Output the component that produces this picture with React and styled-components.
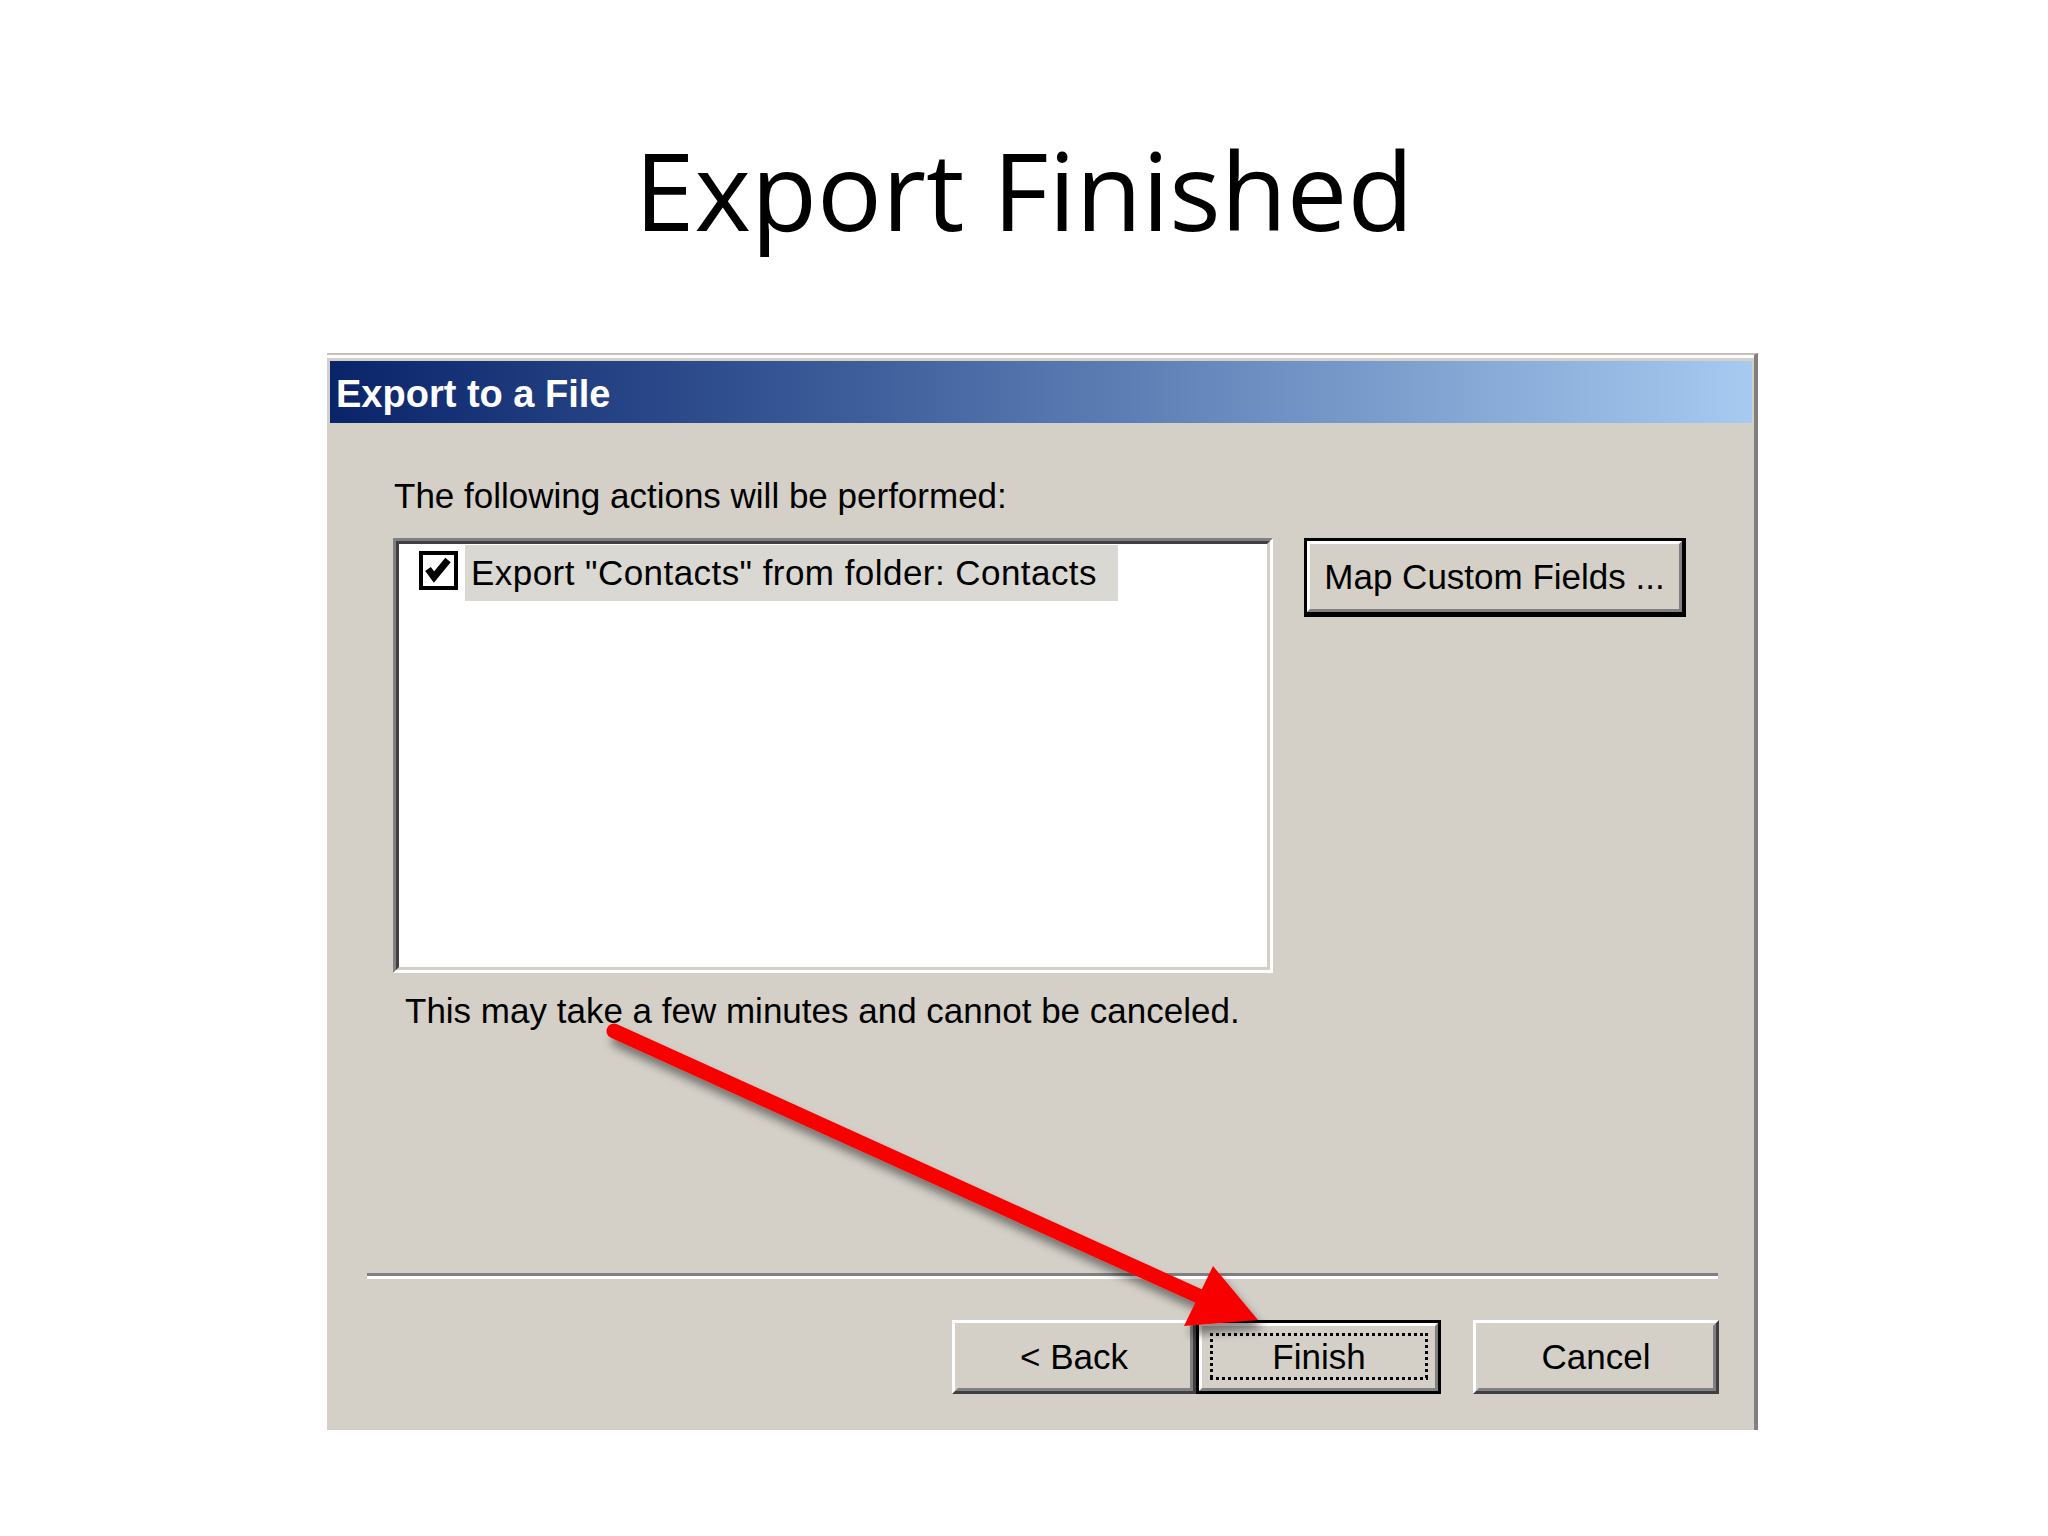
import React from 'react';
import styled, { createGlobalStyle } from 'styled-components';

const GlobalStyle = createGlobalStyle`
  html, body {
    margin: 0;
    padding: 0;
    background: #fff;
  }
`;

const Page = styled.div`
  position: relative;
  width: 2048px;
  height: 1536px;
  overflow: hidden;
  background: #fff;
`;

const Title = styled.h1`
  margin: 0;
  padding-top: 125px;
  height: 130px;
  font-family: "Open Sans", "Liberation Sans", sans-serif;
  font-weight: 400;
  font-size: 108px;
  line-height: 130px;
  text-align: center;
  color: #000;
`;

const Dialog = styled.div`
  box-sizing: border-box;
  width: 1431px;
  height: 1077px;
  margin: 98px 0 0 327px;
  padding: 6px 2px 0 3px;
  display: flex;
  flex-direction: column;
  background: #d4d0c8;
  border-top: 2px solid #c4c1ba;
  border-right: 4px solid #808080;
  box-shadow: inset 0 3px 0 #fff;
  font-family: "Liberation Sans", Arial, sans-serif;
  font-size: 35px;
  color: #000;
`;

const TitleBar = styled.div`
  box-sizing: border-box;
  height: 62px;
  padding: 4px 0 0 6px;
  display: flex;
  align-items: center;
  background: linear-gradient(90deg, #0a246a 0%, #3a5a98 35%, #a6caf0 100%);
  color: #fff;
  font-weight: 700;
  font-size: 38px;
  white-space: nowrap;
`;

const Body = styled.div`
  box-sizing: border-box;
  height: 850px;
  padding-left: 63px;
  display: flex;
  flex-direction: column;
`;

const Prompt = styled.div`
  margin: 53px 0 0 1px;
  line-height: 40px;
  white-space: nowrap;
`;

const Row = styled.div`
  margin-top: 22px;
  display: flex;
  align-items: flex-start;
  gap: 31px;
`;

const ListBox = styled.div`
  box-sizing: border-box;
  width: 880px;
  height: 435px;
  border: 3px solid;
  border-color: #808080 #fff #fff #808080;
`;

const ListInner = styled.div`
  box-sizing: border-box;
  height: 100%;
  padding-top: 1px;
  border: 3px solid;
  border-color: #404040 #d4d0c8 #d4d0c8 #404040;
  background: #fff;
`;

const Item = styled.div`
  display: flex;
  align-items: flex-start;
  height: 56px;
`;

const CheckBox = styled.span`
  box-sizing: border-box;
  width: 39px;
  height: 39px;
  margin: 6px 0 0 20px;
  border: 4px solid #000;
  background: #fff;
  display: flex;

  svg {
    display: block;
  }
`;

const ItemLabel = styled.span`
  margin-left: 7px;
  height: 56px;
  line-height: 56px;
  padding: 0 21px 0 6px;
  background: #dad8d3;
  letter-spacing: 0.45px;
  white-space: nowrap;
`;

const Note = styled.div`
  margin: 18px 0 0 12px;
  line-height: 40px;
  white-space: nowrap;
`;

const Separator = styled.div`
  margin: 0 34px 0 37px;
  height: 3px;
  background: #808080;
  border-bottom: 3px solid #fff;
`;

const ButtonRow = styled.div`
  display: flex;
  justify-content: flex-end;
  padding: 41px 33px 0 0;
`;

const ButtonFrame = styled.div`
  box-sizing: border-box;
  width: ${p => p.$width}px;
  height: ${p => p.$height || 74}px;
  margin-right: ${p => p.$gap || 0}px;
  border: 3px solid;
  border-color: ${p => (p.$default ? '#000' : '#fff #404040 #404040 #fff')};
  border-width: ${p => p.$thick ? '3px 4px 5px 3px' : '3px'};
`;

const ButtonFace = styled.div`
  box-sizing: border-box;
  height: 100%;
  display: flex;
  align-items: center;
  justify-content: center;
  padding: ${p => (p.$focus ? '7px 7px 8px 8px' : '0')};
  border: 3px solid;
  border-color: ${p => (p.$raised ? '#fff #808080 #808080 #fff' : '#d4d0c8 #808080 #808080 #d4d0c8')};
  white-space: nowrap;
  line-height: 40px;
`;

/* dotted focus rectangle with square dots, like the classic button */
const FocusRect = styled.div`
  flex: 1;
  align-self: stretch;
  display: flex;
  align-items: center;
  justify-content: center;
  background:
    repeating-linear-gradient(90deg, #000 0 3px, transparent 3px 6px) top left / 100% 3px no-repeat,
    repeating-linear-gradient(90deg, #000 0 3px, transparent 3px 6px) bottom left / 100% 3px no-repeat,
    repeating-linear-gradient(180deg, #000 0 3px, transparent 3px 6px) top left / 3px 100% no-repeat,
    repeating-linear-gradient(180deg, #000 0 3px, transparent 3px 6px) top right / 3px 100% no-repeat;
`;

const Overlay = styled.svg`
  position: absolute;
  top: 0;
  left: 0;
  pointer-events: none;
`;

const Check = () => (
  <svg width="31" height="31" viewBox="0 0 31 31">
    <polyline points="5,14 11,22 25,5" fill="none" stroke="#000" strokeWidth="7" strokeLinejoin="miter" />
  </svg>
);

const WizardButton = ({ label, width, gap, isDefault }) => (
  <ButtonFrame $width={width} $gap={gap} $default={isDefault}>
    <ButtonFace $raised={isDefault} $focus={isDefault}>
      {isDefault ? <FocusRect>{label}</FocusRect> : label}
    </ButtonFace>
  </ButtonFrame>
);

const RedArrow = () => (
  <Overlay width="2048" height="1536" viewBox="0 0 2048 1536">
    <defs>
      <filter id="arrowShadow" x="-10%" y="-20%" width="130%" height="150%">
        <feDropShadow dx="5" dy="9" stdDeviation="5" floodColor="#000" floodOpacity="0.45" />
      </filter>
    </defs>
    <g filter="url(#arrowShadow)" fill="#f80000">
      <line x1="614" y1="1031" x2="1203" y2="1298" stroke="#f80000" strokeWidth="15" strokeLinecap="round" />
      <polygon points="1213,1266 1184,1326 1258,1320" />
    </g>
  </Overlay>
);

export default function App() {
  return (
    <Page>
      <GlobalStyle />
      <Title>Export Finished</Title>
      <Dialog>
        <TitleBar>Export to a File</TitleBar>
        <Body>
          <Prompt>The following actions will be performed:</Prompt>
          <Row>
            <ListBox>
              <ListInner>
                <Item>
                  <CheckBox>
                    <Check />
                  </CheckBox>
                  <ItemLabel>Export "Contacts" from folder: Contacts</ItemLabel>
                </Item>
              </ListInner>
            </ListBox>
            <ButtonFrame $width={382} $height={79} $default $thick>
              <ButtonFace $raised>Map Custom Fields ...</ButtonFace>
            </ButtonFrame>
          </Row>
          <Note>This may take a few minutes and cannot be canceled.</Note>
        </Body>
        <Separator />
        <ButtonRow>
          <WizardButton label="< Back" width={244} />
          <WizardButton label="Finish" width={245} gap={32} isDefault />
          <WizardButton label="Cancel" width={246} />
        </ButtonRow>
      </Dialog>
      <RedArrow />
    </Page>
  );
}
